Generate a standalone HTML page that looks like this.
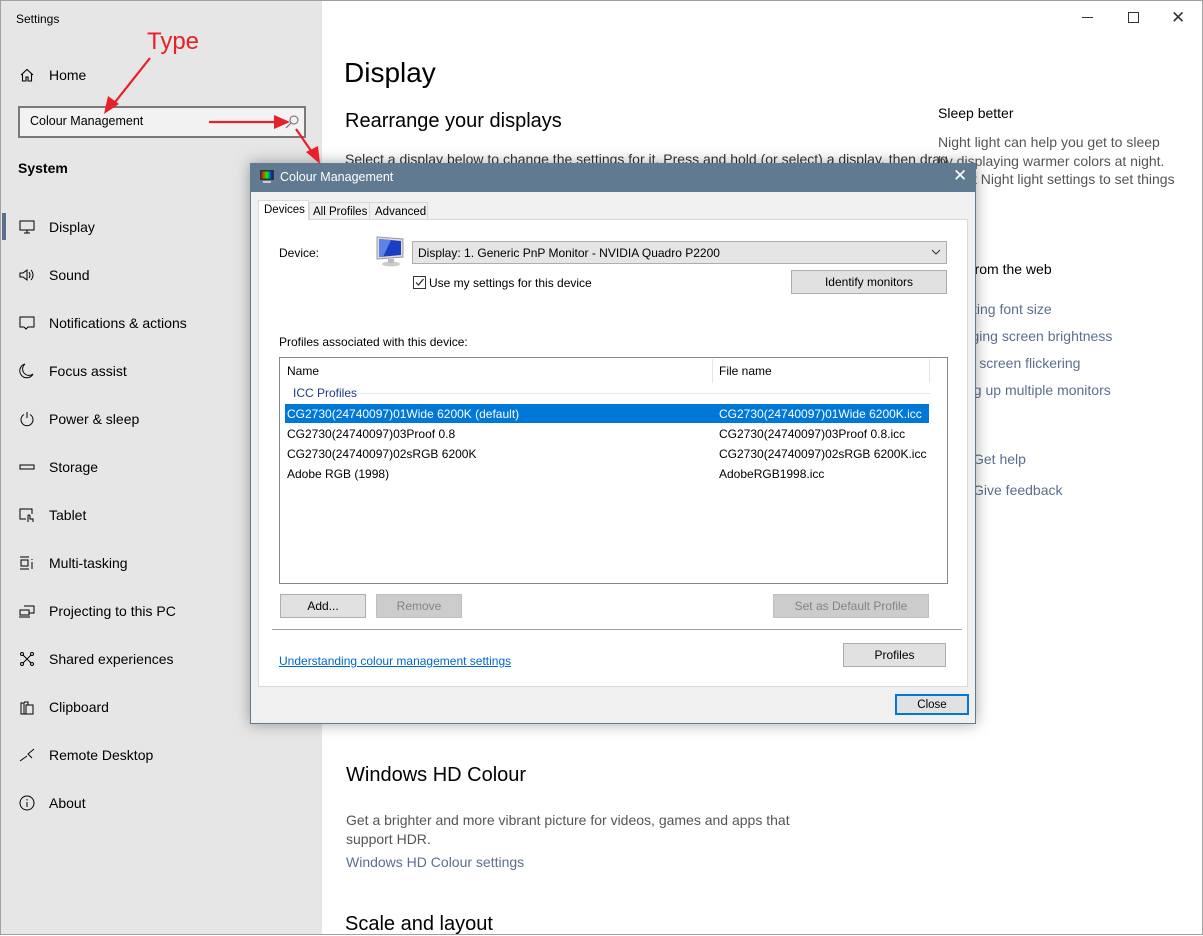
<!DOCTYPE html>
<html><head><meta charset="utf-8"><style>
*{margin:0;padding:0;box-sizing:border-box}
body{width:1203px;height:935px;position:relative;overflow:hidden;background:#fff;font-family:"Liberation Sans",sans-serif;color:#000}
.a{position:absolute;white-space:nowrap}
#side{position:absolute;left:0;top:0;width:322px;height:935px;background:#e6e6e6}
.nav{position:absolute;left:49px;font-size:14px;color:#000}
.ic{position:absolute;left:19px;width:16px;height:16px}
.s12{font-size:12px}
.btn{position:absolute;background:#e1e1e1;border:1px solid #adadad;font-size:12px;text-align:center}
.dis{background:#cccccc;border-color:#bfbfbf;color:#838383}
.link{color:#5b6f8c;font-size:14px}
.row{position:absolute;left:287px;font-size:12px}
.row2{position:absolute;left:719px;font-size:12px}
</style></head><body>
<div id="side"></div>
<div class="a" style="left:0;top:0;width:1203px;height:935px;border:1px solid #a0a0a0;pointer-events:none;z-index:9"></div>
<div class="a s12" style="left:16px;top:12px;color:#000">Settings</div>
<div class="a" style="left:1082px;top:17px;width:11px;height:1px;background:#333"></div>
<div class="a" style="left:1128px;top:12px;width:11px;height:11px;border:1px solid #333"></div>
<div class="a" style="left:1171px;top:8px;font-size:17px;color:#333">✕</div>

<svg class="ic" style="top:67px" viewBox="0 0 16 16"><path d="M2 8L8 2.5 14 8M3.5 7v7h3.5v-4h2v4h3.5V7" fill="none" stroke="#000" stroke-width="1.1"/></svg>
<div class="nav" style="top:67px">Home</div>
<div class="a" style="left:18px;top:106px;width:288px;height:32px;border:2px solid #7a7a7a;background:#f2f2f2"></div>
<div class="a" style="left:30px;top:114px;font-size:12.5px">Colour Management</div>
<svg class="a" style="left:284px;top:114px" width="16" height="16" viewBox="0 0 16 16"><circle cx="10" cy="6" r="4" fill="none" stroke="#666"/><path d="M7 9L2 14" stroke="#666"/></svg>
<div class="a" style="left:18px;top:160px;font-size:14px;font-weight:bold">System</div>

<div class="a" style="left:2px;top:213px;width:4px;height:27px;background:#5b6f8c"></div>
<svg class="ic" style="top:219px" viewBox="0 0 16 16"><rect x="1" y="2" width="14" height="9" fill="none" stroke="#000"/><path d="M5 14h6M8 11v3" stroke="#000"/></svg>
<div class="nav" style="top:219px">Display</div>
<svg class="ic" style="top:267px" viewBox="0 0 16 16"><path d="M1 6h3l4-3v10l-4-3H1z M10 5q2 3 0 6M12 3q4 5 0 10" fill="none" stroke="#000"/></svg>
<div class="nav" style="top:267px">Sound</div>
<svg class="ic" style="top:315px" viewBox="0 0 16 16"><path d="M1 2h14v10H9l-2 2-2-2H1z" fill="none" stroke="#000"/></svg>
<div class="nav" style="top:315px">Notifications &amp; actions</div>
<svg class="ic" style="top:363px" viewBox="0 0 16 16"><path d="M6 1a7 7 0 1 0 8 10A6 6 0 0 1 6 1z" fill="none" stroke="#000"/></svg>
<div class="nav" style="top:363px">Focus assist</div>
<svg class="ic" style="top:411px" viewBox="0 0 16 16"><path d="M5 3.5a6 6 0 1 0 6 0M8 1v6" fill="none" stroke="#000"/></svg>
<div class="nav" style="top:411px">Power &amp; sleep</div>
<svg class="ic" style="top:459px" viewBox="0 0 16 16"><rect x="1" y="6" width="14" height="4" fill="none" stroke="#000"/></svg>
<div class="nav" style="top:459px">Storage</div>
<svg class="ic" style="top:507px" viewBox="0 0 16 16"><path d="M7 12H1V2h12v5M9 15v-6a1 1 0 0 1 2 0v3h3v3" fill="none" stroke="#000"/></svg>
<div class="nav" style="top:507px">Tablet</div>
<svg class="ic" style="top:555px" viewBox="0 0 16 16"><path d="M1 2h9M1 14h9M2 5h7v6H2zM13 4v1M13 7v7" fill="none" stroke="#000"/></svg>
<div class="nav" style="top:555px">Multi-tasking</div>
<svg class="ic" style="top:603px" viewBox="0 0 16 16"><path d="M5 3h10v7H10M1 7h9v5H1zM0 14h11" fill="none" stroke="#000"/></svg>
<div class="nav" style="top:603px">Projecting to this PC</div>
<svg class="ic" style="top:651px" viewBox="0 0 16 16"><path d="M4 4l8 8M12 4l-8 8" stroke="#000"/><circle cx="3" cy="3" r="1.5" fill="#e6e6e6" stroke="#000"/><circle cx="13" cy="3" r="1.5" fill="#e6e6e6" stroke="#000"/><circle cx="3" cy="13" r="1.5" fill="#e6e6e6" stroke="#000"/><circle cx="13" cy="13" r="1.5" fill="#e6e6e6" stroke="#000"/></svg>
<div class="nav" style="top:651px">Shared experiences</div>
<svg class="ic" style="top:699px" viewBox="0 0 16 16"><path d="M2 4h3v11H2zM5 15h9V6H7v9M5 3h4v3" fill="none" stroke="#000"/></svg>
<div class="nav" style="top:699px">Clipboard</div>
<svg class="ic" style="top:747px" viewBox="0 0 16 16"><path d="M1 14l7-5M15 2L9 7l4 4" fill="none" stroke="#000"/></svg>
<div class="nav" style="top:747px">Remote Desktop</div>
<svg class="ic" style="top:795px" viewBox="0 0 16 16"><circle cx="8" cy="8" r="7" fill="none" stroke="#000"/><path d="M8 7v5M8 4v1.5" stroke="#000"/></svg>
<div class="nav" style="top:795px">About</div>

<!-- main -->
<div class="a" style="left:344px;top:57px;font-size:28px;color:#000">Display</div>
<div class="a" style="left:345px;top:110px;font-size:20px">Rearrange your displays</div>
<div class="a" style="left:345px;top:151px;font-size:14px;color:#333">Select a display below to change the settings for it. Press and hold (or select) a display, then drag</div>
<div class="a" style="left:938px;top:105px;font-size:14px">Sleep better</div>
<div class="a" style="left:938px;top:133px;font-size:14px;color:#555;line-height:18.5px">Night light can help you get to sleep<br>by displaying warmer colors at night.<br>Select Night light settings to set things</div>
<div class="a" style="left:938px;top:261px;font-size:14px">Help from the web</div>
<div class="a link" style="left:938px;top:296px;line-height:27px">Adjusting font size<br>Changing screen brightness<br>Fixing screen flickering<br>Setting up multiple monitors</div>
<div class="a link" style="left:973px;top:444px;line-height:31px">Get help<br>Give feedback</div>
<div class="a" style="left:346px;top:764px;font-size:20px">Windows HD Colour</div>
<div class="a" style="left:346px;top:811px;font-size:14px;color:#555;line-height:18.5px">Get a brighter and more vibrant picture for videos, games and apps that<br>support HDR.</div>
<div class="a link" style="left:346px;top:854px">Windows HD Colour settings</div>
<div class="a" style="left:345px;top:913px;font-size:20px">Scale and layout</div>

<!-- dialog -->
<div class="a" style="left:250px;top:163px;width:726px;height:561px;background:#f0f0f0;border:1px solid #5f7a91;box-shadow:0 0 14px rgba(0,0,0,.35)"></div>
<div class="a" style="left:250px;top:163px;width:726px;height:29px;background:#5f7a91"></div>
<svg class="a" style="left:259px;top:169px" width="16" height="16" viewBox="0 0 16 16"><rect x="1" y="1" width="14" height="10" fill="#333"/><rect x="2.5" y="2.5" width="11" height="7" fill="url(#g)"/><defs><linearGradient id="g"><stop offset="0" stop-color="#f00"/><stop offset=".5" stop-color="#0f0"/><stop offset="1" stop-color="#00f"/></linearGradient></defs><rect x="4" y="12" width="8" height="2" fill="#ccc"/></svg>
<div class="a" style="left:280px;top:170px;font-size:12.5px;color:#fff">Colour Management</div>
<div class="a" style="left:953px;top:166px;font-size:17px;color:#fff">✕</div>

<div class="a" style="left:258px;top:219px;width:710px;height:468px;background:#fff;border:1px solid #d9d9d9"></div>
<div class="a" style="left:309px;top:202px;width:61px;height:18px;border:1px solid #d9d9d9;background:#f0f0f0;padding:3px 3px;font-size:11.5px">All Profiles</div>
<div class="a" style="left:369px;top:202px;width:59px;height:18px;border:1px solid #d9d9d9;background:#f0f0f0;padding:3px 5px;font-size:11.5px">Advanced</div>
<div class="a" style="left:258px;top:200px;width:51px;height:20px;border:1px solid #d9d9d9;border-bottom:none;background:#fff;padding:3px 5px;font-size:11.5px">Devices</div>

<div class="a s12" style="left:279px;top:246px">Device:</div>
<svg class="a" style="left:375px;top:235px" width="32" height="32" viewBox="0 0 32 32"><path d="M2 2l26 2v18L2 24z" fill="#ddd" stroke="#999"/><path d="M4 4l22 2v14L4 22z" fill="#1a3fc0"/><path d="M4 4l12 1L8 22H4z" fill="#5c83ea"/><ellipse cx="16" cy="29" rx="9" ry="2.5" fill="#ccc"/><rect x="13" y="24" width="6" height="4" fill="#bbb"/></svg>
<div class="a s12" style="left:412px;top:241px;width:535px;height:23px;background:#e5e5e5;border:1px solid #adadad;padding:4px 5px">Display: 1. Generic PnP Monitor - NVIDIA Quadro P2200</div>
<svg class="a" style="left:931px;top:249px" width="10" height="6"><path d="M1 1l4 4 4-4" fill="none" stroke="#333"/></svg>
<div class="a" style="left:413px;top:276px;width:13px;height:13px;border:1px solid #333;background:#fff"></div>
<svg class="a" style="left:414px;top:277px" width="11" height="11"><path d="M2 5.5l2.5 2.5 5-6" fill="none" stroke="#222" stroke-width="1.2"/></svg>
<div class="a s12" style="left:429px;top:276px">Use my settings for this device</div>
<div class="btn" style="left:791px;top:270px;width:156px;height:24px;padding-top:4px">Identify monitors</div>

<div class="a s12" style="left:279px;top:335px">Profiles associated with this device:</div>
<div class="a" style="left:279px;top:357px;width:669px;height:227px;border:1px solid #828790;background:#fff"></div>
<div class="a s12" style="left:287px;top:364px">Name</div>
<div class="a" style="left:712px;top:359px;width:1px;height:24px;background:#e5e5e5"></div>
<div class="a" style="left:929px;top:359px;width:1px;height:24px;background:#e5e5e5"></div>
<div class="a s12" style="left:719px;top:364px">File name</div>
<div class="a s12" style="left:293px;top:386px;color:#1e3a8a">ICC Profiles</div>
<div class="a" style="left:360px;top:393px;width:570px;height:1px;background:#e2e8f0"></div>
<div class="a" style="left:285px;top:404px;width:644px;height:19px;background:#0078d7"></div>
<div class="row" style="top:407px;color:#fff">CG2730(24740097)01Wide 6200K (default)</div>
<div class="row2" style="top:407px;color:#fff">CG2730(24740097)01Wide 6200K.icc</div>
<div class="row" style="top:427px">CG2730(24740097)03Proof 0.8</div>
<div class="row2" style="top:427px">CG2730(24740097)03Proof 0.8.icc</div>
<div class="row" style="top:447px">CG2730(24740097)02sRGB 6200K</div>
<div class="row2" style="top:447px">CG2730(24740097)02sRGB 6200K.icc</div>
<div class="row" style="top:467px">Adobe RGB (1998)</div>
<div class="row2" style="top:467px">AdobeRGB1998.icc</div>

<div class="btn" style="left:280px;top:594px;width:86px;height:24px;padding-top:4px">Add...</div>
<div class="btn dis" style="left:376px;top:594px;width:86px;height:24px;padding-top:4px">Remove</div>
<div class="btn dis" style="left:773px;top:594px;width:156px;height:24px;padding-top:4px">Set as Default Profile</div>
<div class="a" style="left:272px;top:629px;width:690px;height:1px;background:#a0a0a0"></div>
<div class="a s12" style="left:279px;top:654px;color:#0066cc;text-decoration:underline">Understanding colour management settings</div>
<div class="btn" style="left:843px;top:643px;width:103px;height:24px;padding-top:4px">Profiles</div>
<div class="btn" style="left:895px;top:694px;width:74px;height:21px;padding-top:2px;border:2px solid #0078d7;font-size:11.5px;line-height:14px">Close</div>

<!-- annotations -->
<div class="a" style="left:147px;top:28px;font-size:24px;color:#e8202a">Type</div>
<svg class="a" style="left:0;top:0;z-index:5" width="400" height="200" viewBox="0 0 400 200">
<g stroke="#e8202a" stroke-width="2.2" fill="none">
<path d="M150 58L112 106"/><path d="M209 122L282 122"/><path d="M296 129L316 158"/></g>
<path d="M104 114L108 96 119 104z" fill="#e8202a"/>
<path d="M290 122L274 115 274 129z" fill="#e8202a"/>
<path d="M320 164L306 152 318 146z" fill="#e8202a"/>
</svg>
</body></html>
